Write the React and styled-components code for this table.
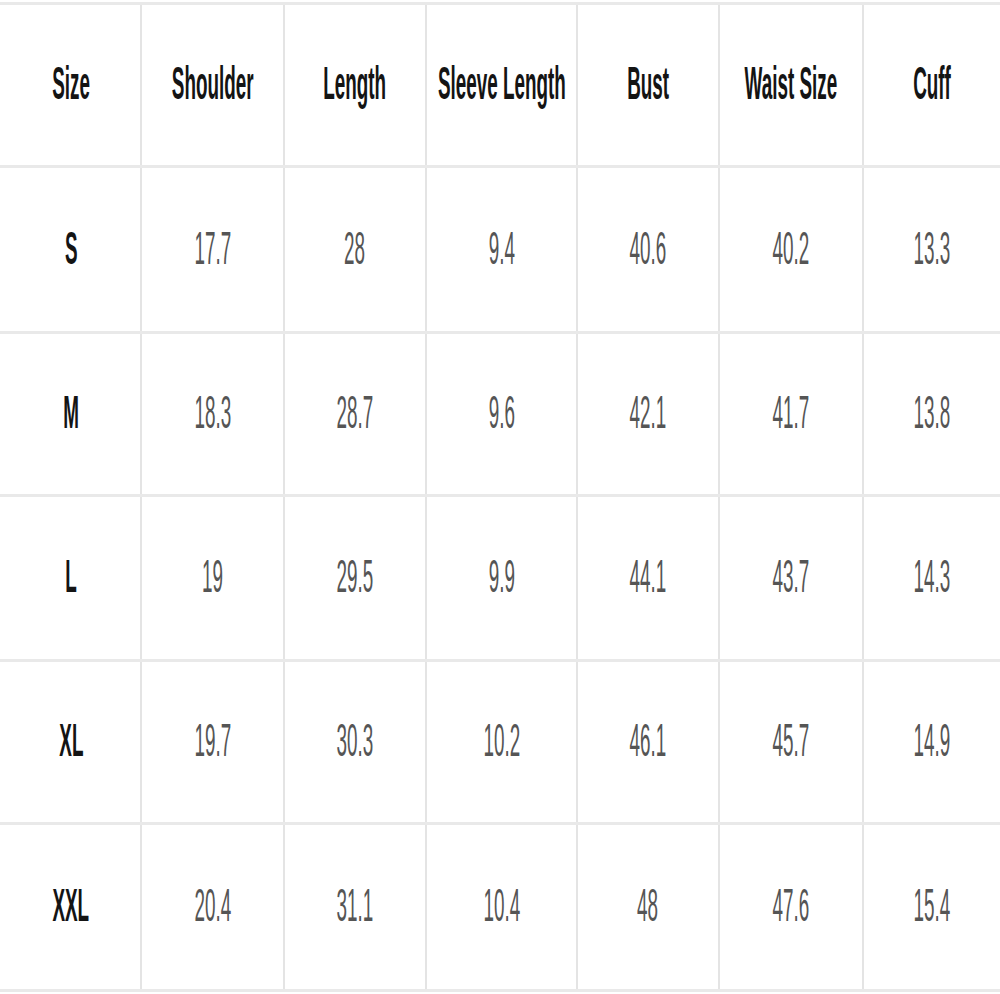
import React from "react";
import styled, { createGlobalStyle } from "styled-components";

const Global = createGlobalStyle`
  html, body { margin: 0; padding: 0; background: #ffffff; }
  body { font-family: "Liberation Sans", Arial, sans-serif; }
  *, *::before, *::after { box-sizing: border-box; }
`;

const Table = styled.div`
  width: 1000px;
  padding-top: 2px;
  background: #fff;
`;

const Row = styled.div`
  display: grid;
  grid-template-columns: 140px 143px 142px 151px 142px 144px 138px;
  height: ${(p) => p.$h}px;
  border-top: 3px solid #e9e9e9;
  &:last-child {
    border-bottom: 3px solid #e9e9e9;
  }
`;

const Cell = styled.div`
  display: flex;
  align-items: center;
  justify-content: center;
  overflow: visible;
  border-left: 2px solid ${(p) => (p.$first ? "transparent" : "#e4e4e4")};
  min-width: 0;
`;

const Text = styled.span`
  display: inline-block;
  white-space: nowrap;
  font-family: "Liberation Sans", Arial, sans-serif;
  font-size: 46px;
  line-height: 1;
  font-weight: ${(p) => (p.$bold ? 700 : 400)};
  color: ${(p) => (p.$bold ? "#141414" : "#555555")};
  transform: translateY(-2px) scaleX(0.41);
  transform-origin: center;
`;

const headers = ["Size", "Shoulder", "Length", "Sleeve Length", "Bust", "Waist Size", "Cuff"];
const rows = [
  ["S", "17.7", "28", "9.4", "40.6", "40.2", "13.3"],
  ["M", "18.3", "28.7", "9.6", "42.1", "41.7", "13.8"],
  ["L", "19", "29.5", "9.9", "44.1", "43.7", "14.3"],
  ["XL", "19.7", "30.3", "10.2", "46.1", "45.7", "14.9"],
  ["XXL", "20.4", "31.1", "10.4", "48", "47.6", "15.4"],
];
const heights = [163, 166, 163, 165, 163, 170];

export default function App() {
  return (
    <>
      <Global />
      <Table>
        <Row $h={heights[0]}>
          {headers.map((h, i) => (
            <Cell key={h} $first={i === 0}>
              <Text $bold>{h}</Text>
            </Cell>
          ))}
        </Row>
        {rows.map((r, ri) => (
          <Row key={r[0]} $h={heights[ri + 1]}>
            {r.map((v, i) => (
              <Cell key={i} $first={i === 0}>
                <Text $bold={i === 0}>{v}</Text>
              </Cell>
            ))}
          </Row>
        ))}
      </Table>
    </>
  );
}
